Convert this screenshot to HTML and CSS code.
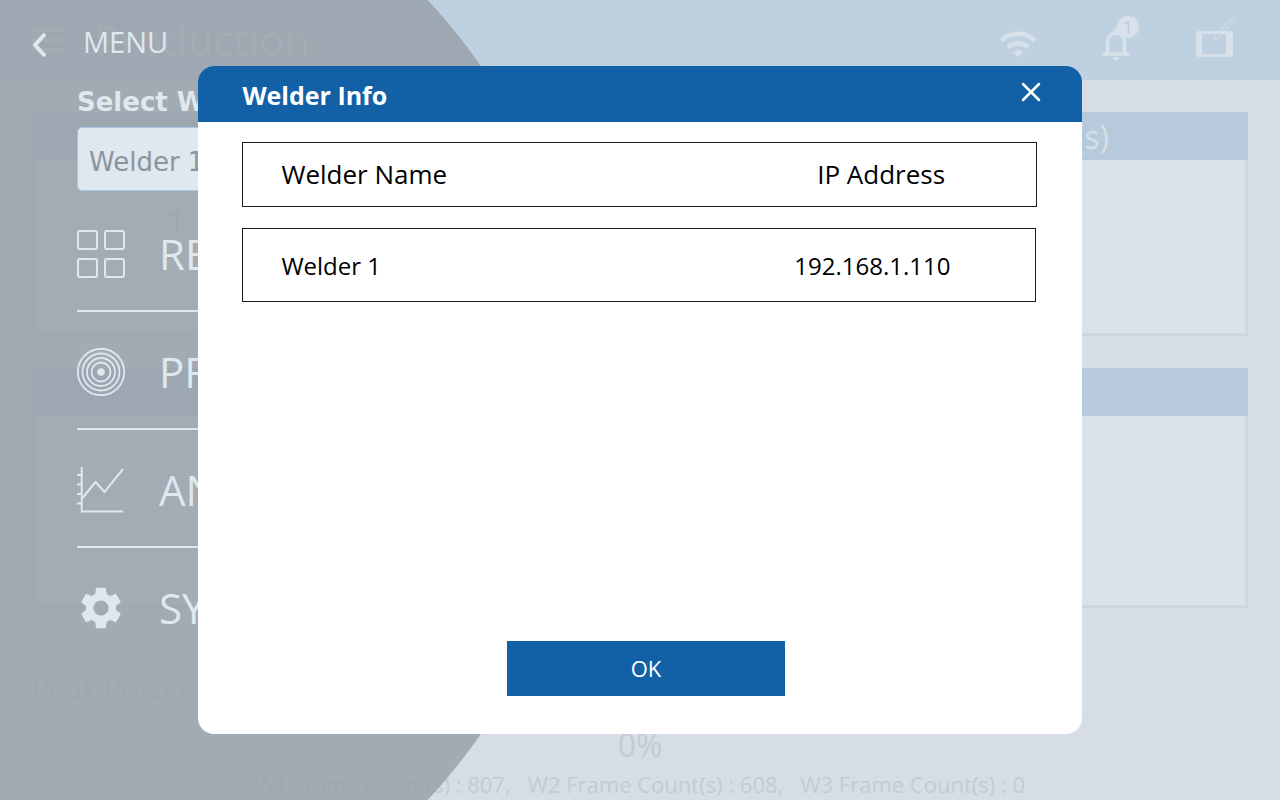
FILE: index.html
```html
<!DOCTYPE html>
<html lang="en">
<head>
<meta charset="utf-8">
<meta name="viewport" content="width=device-width, initial-scale=1">
<title>Welder Info</title>
<link rel="stylesheet" href="styles.css">
</head>
<body>
<div class="app">
  <header class="topbar">
    <button class="icon-button hamburger" type="button" aria-label="Open menu">
      <svg viewBox="0 0 24 24" width="48" height="48"><path d="M3 18h18v-2H3v2zm0-5h18v-2H3v2zm0-7v2h18V6H3z"/></svg>
    </button>
    <h1 class="page-title">Production</h1>
    <div class="status">
      <svg viewBox="0 0 24 24" width="40" height="40"><path d="M1 9l2 2c4.97-4.97 13.03-4.97 18 0l2-2C16.93 2.93 7.08 2.93 1 9zm8 8l3 3 3-3c-1.65-1.66-4.34-1.66-6 0zm-4-4l2 2c2.76-2.76 7.24-2.76 10 0l2-2C15.14 9.14 8.87 9.14 5 13z"/></svg>
      <button class="icon-button alerts" type="button" aria-label="Notifications">
        <svg viewBox="0 0 24 24" width="40" height="40"><path d="M12 22c1.1 0 2-.9 2-2h-4c0 1.1.9 2 2 2zm6-6v-5c0-3.07-1.63-5.64-4.5-6.32V4c0-.83-.67-1.5-1.5-1.5s-1.5.67-1.5 1.5v.68C7.64 5.36 6 7.92 6 11v5l-2 2v1h16v-1l-2-2zm-2 1H8v-6c0-2.48 1.51-4.5 4-4.5s4 2.02 4 4.5v6z"/></svg>
        <span class="badge">1</span>
      </button>
      <button class="icon-button tablet" type="button" aria-label="Edit screen">
        <svg viewBox="0 0 44 44" width="44" height="44">
          <path fill-rule="evenodd" d="M5 15h31a3 3 0 0 1 3 3v20a3 3 0 0 1-3 3H5a3 3 0 0 1-3-3V18a3 3 0 0 1 3-3zm3 3v20h24V18z"/>
          <path class="pencil" d="M39.500 1l2 2.500-17.500 19-3.500 1v-4zM36 4.500l2.500 2.500"/>
        </svg>
      </button>
    </div>
  </header>
  <main class="content">
    <section class="panel">
      <h2 class="panel-title"><span>Part Count(s)</span></h2>
      <div class="panel-body cycle"><span>1 : 0</span></div>
    </section>
    <section class="panel panel-tall">
      <h2 class="panel-title"></h2>
      <div class="panel-body"></div>
    </section>
    <p class="peak">Peak Power</p>
    <p class="percent">0%</p>
    <p class="frames"><span>W1 Frame Count(s) : 807,</span><span>W2 Frame Count(s) : 608,</span><span>W3 Frame Count(s) : 0</span></p>
  </main>
</div>

<aside class="drawer">
  <button class="back" type="button">
    <svg viewBox="0 0 16 26" width="16" height="26"><path d="M14 2L4 13l10 11"/></svg>
    <span>MENU</span>
  </button>
  <div class="picker">
    <label for="welder">Select Welder</label>
    <select id="welder"><option>Welder 1</option></select>
  </div>
  <nav class="menu">
    <a href="#recipes">
      <svg class="line" viewBox="0 0 48 48" width="48" height="48"><rect x="1" y="1" width="19" height="18" rx="2"/><rect x="28" y="1" width="19" height="18" rx="2"/><rect x="1" y="29" width="19" height="18" rx="2"/><rect x="28" y="29" width="19" height="18" rx="2"/></svg>
      <span>RECIPES</span>
    </a>
    <a href="#production">
      <svg class="line thin" viewBox="0 0 48 48" width="48" height="48"><circle cx="24" cy="24" r="23.200"/><circle cx="24" cy="24" r="18.500"/><circle cx="24" cy="24" r="14"/><circle cx="24" cy="24" r="9.500"/><circle class="dot" cx="24" cy="24" r="3.800"/></svg>
      <span>PRODUCTION</span>
    </a>
    <a href="#analytics">
      <svg class="line chart" viewBox="0 0 48 48" width="48" height="48"><path d="M4.700 1v44.500H46M0 9h4.700M0 18.500h4.700M0 28h4.700M0 37.500h4.700M4.700 33L18.500 16l9 10L46 3"/></svg>
      <span>ANALYTICS</span>
    </a>
    <a href="#system">
      <svg viewBox="2 2 20 20" width="48" height="42"><path d="M19.140 12.940c.04-.3.060-.61.060-.94 0-.32-.02-.64-.07-.94l2.030-1.580c.18-.14.23-.41.120-.61l-1.920-3.320c-.12-.22-.37-.29-.59-.22l-2.390.96c-.5-.38-1.030-.7-1.620-.94L14.400 2.810c-.04-.24-.24-.41-.48-.41h-3.840c-.24 0-.43.17-.47.41L9.250 5.350C8.660 5.590 8.120 5.920 7.630 6.290L5.240 5.330c-.22-.08-.47 0-.59.22L2.740 8.870C2.620 9.080 2.660 9.340 2.860 9.480l2.030 1.580C4.840 11.360 4.800 11.690 4.800 12s.02.64.07.94l-2.030 1.580c-.18.14-.23.41-.12.61l1.920 3.320c.12.22.37.29.59.22l2.390-.96c.5.38 1.030.7 1.620.94l.36 2.540c.05.24.24.41.48.41h3.840c.24 0 .44-.17.47-.41l.36-2.540c.59-.24 1.130-.56 1.620-.94l2.390.96c.22.08.47 0 .59-.22l1.920-3.320c.12-.22.070-.47-.12-.61L19.140 12.940zM12 15.600c-1.980 0-3.600-1.620-3.600-3.600s1.620-3.600 3.600-3.600 3.600 1.620 3.600 3.600S13.980 15.600 12 15.600z"/></svg>
      <span>SYSTEM</span>
    </a>
  </nav>
</aside>

<div class="overlay">
  <section class="dialog" role="dialog" aria-modal="true" aria-labelledby="dialog-title">
    <header class="dialog-head">
      <h2 id="dialog-title">Welder Info</h2>
      <button class="icon-button" type="button" aria-label="Close">
        <svg class="cross" viewBox="0 0 20 20" width="20" height="20"><path d="M2 2l16 16M18 2L2 18"/></svg>
      </button>
    </header>
    <table class="welders">
      <thead><tr><th>Welder Name</th><th>IP Address</th></tr></thead>
      <tbody><tr><td>Welder 1</td><td>192.168.1.110</td></tr></tbody>
    </table>
    <footer class="dialog-foot"><button class="ok" type="button">OK</button></footer>
  </section>
</div>
</body>
</html>
```
FILE: styles.css
```css
* { box-sizing: border-box; }

body {
  margin: 0;
  height: 100vh;
  overflow: hidden;
  position: relative;
  background: #d6dde4;
  font-family: "Open Sans", "Noto Sans", sans-serif;
}

h1, h2, p { margin: 0; font-weight: 400; }

button {
  border: 0;
  padding: 0;
  background: none;
  color: inherit;
  font: inherit;
}

svg { display: block; fill: currentColor; }

.icon-button { display: flex; position: relative; }

/* Page behind the menu */
.app { color: #c4cbd4; }

.topbar {
  display: flex;
  align-items: center;
  height: 80px;
  padding: 0 42px 0 24px;
  background: #bfd0e0;
  color: #d8e1e9;
}

.page-title { margin-left: 22px; font-size: 42px; line-height: 56px; }

.status {
  display: flex;
  align-items: center;
  gap: 58px;
  margin-left: auto;
  padding-top: 8px;
}

.tablet { margin-top: -12px; }
.pencil { fill: none; stroke: currentColor; stroke-width: 1; }

.badge {
  position: absolute;
  top: -8px;
  right: -3px;
  width: 22px;
  height: 22px;
  border-radius: 50%;
  background: #d8e1e9;
  color: #c0cad6;
  font-size: 18px;
  line-height: 22px;
  text-align: center;
}

.content { padding: 32px 32px 0; }

.panel {
  display: flex;
  flex-direction: column;
  height: 224px;
  margin-bottom: 32px;
}

.panel-tall { height: 240px; }

.panel-title {
  display: flex;
  justify-content: flex-end;
  height: 48px;
  padding-right: 139px;
  background: #b7cadb;
  color: #d6dfe8;
  font-size: 32px;
  line-height: 50px;
}

.panel-body {
  flex: 1;
  border: 3px solid #cfd6dd;
  border-top: 0;
  background: #dae1e8;
}

.cycle { padding: 40px 132px; font-size: 32px; }

.peak { padding-top: 28px; font-size: 29px; line-height: 42px; }
.percent { font-size: 32px; line-height: 44px; padding-top: 13px; text-align: center; }

.frames {
  display: flex;
  justify-content: center;
  gap: 17px;
  padding-top: 2px;
  font-size: 22px;
  line-height: 30px;
}

/* Round menu sliding in from the left */
.drawer {
  position: absolute;
  inset: 0;
  background: radial-gradient(circle at 0 50%, rgba(150, 158, 166, 0.8) 585px, transparent 586px);
  color: #dfe7ef;
}

.back {
  display: flex;
  align-items: center;
  gap: 36px;
  height: 86px;
  padding-left: 31px;
  font-size: 29px;
}

.back svg { fill: none; stroke: currentColor; stroke-width: 4; margin-top: 4px; }
.back span { padding-bottom: 3px; }

.picker {
  display: flex;
  flex-direction: column;
  width: 320px;
  margin-left: 77px;
  font-family: "DejaVu Sans", sans-serif;
}

.picker label { height: 41px; font-size: 26px; font-weight: 700; line-height: 32px; }

.picker select {
  appearance: none;
  height: 64px;
  padding: 5px 11px 0;
  border: 1px solid #a8c4e0;
  border-radius: 5px;
  background: #dfe7ef;
  color: #8b949d;
  font: inherit;
  font-size: 26px;
}

.menu { width: 360px; margin: 3px 0 0 77px; }

.menu a {
  display: flex;
  align-items: center;
  gap: 34px;
  height: 118px;
  padding-top: 4px;
  border-bottom: 2px solid #dfe7ef;
  color: inherit;
  font-size: 42px;
  text-decoration: none;
}

.menu a:last-child { border-bottom-color: transparent; }
.menu span { padding-bottom: 2px; }

.line { fill: none; stroke: currentColor; stroke-width: 2; }
.thin { stroke-width: 1.8; }
.dot { fill: currentColor; stroke: none; }

/* Dialog */
.overlay {
  position: absolute;
  inset: 0;
  display: grid;
  place-items: center;
}

.dialog {
  display: flex;
  flex-direction: column;
  width: 69%;
  height: 668px;
  border-radius: 16px;
  overflow: hidden;
  background: #fff;
  color: #000;
}

.dialog-head {
  display: flex;
  align-items: center;
  justify-content: space-between;
  height: 56px;
  padding: 0 41px 0 44px;
  background: #1261a7;
  color: #fff;
}

.dialog-head h2 { padding-top: 1px; font-size: 25px; font-weight: 700; }
.dialog-head button { margin-bottom: 4px; }
.cross { fill: none; stroke: currentColor; stroke-width: 2.5; stroke-linecap: round; }

.welders { display: block; margin: 20px 45px 0 44px; }
.welders thead, .welders tbody { display: block; }

.welders tr {
  display: flex;
  align-items: center;
  justify-content: space-between;
  border: 1px solid #1c1c1c;
}

.welders th, .welders td { padding: 0; font-weight: 400; text-align: left; }
.welders th:last-child, .welders td:last-child { text-align: center; }
.welders th:first-child, .welders td:first-child { padding-left: 38px; }

.welders thead tr { height: 65px; padding-bottom: 1px; font-size: 26px; }
.welders th:last-child { width: 39%; }

.welders tbody { margin: 21px 1px 0 0; }
.welders tbody tr { height: 74px; padding-top: 1px; font-size: 24px; }
.welders td:last-child { width: 41%; }

.dialog-foot {
  display: flex;
  justify-content: center;
  margin-top: auto;
  padding: 0 0 38px 12px;
}

.ok {
  width: 278px;
  height: 55px;
  padding-bottom: 1px;
  background: #1261a7;
  color: #fff;
  font-size: 22px;
}
```
